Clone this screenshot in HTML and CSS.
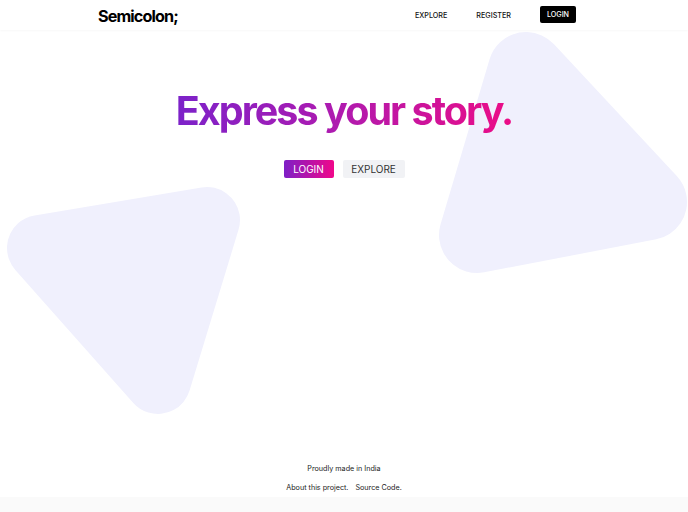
FILE: index.html
```html
<!DOCTYPE html>
<html lang="en">
<head>
<meta charset="utf-8">
<title>Semicolon;</title>
<link rel="stylesheet" href="styles.css">
</head>
<body>
<svg class="blob blob-left" width="260" height="430" viewBox="0 0 260 430" aria-hidden="true">
  <polygon points="40,248 207,220 158,381" fill="#f0f0fd" stroke="#f0f0fd" stroke-width="66" stroke-linejoin="round"/>
</svg>
<svg class="blob blob-right" width="688" height="300" viewBox="0 0 688 300" aria-hidden="true">
  <polygon points="526,70 477,235 649,202" fill="#f0f0fd" stroke="#f0f0fd" stroke-width="76" stroke-linejoin="round"/>
</svg>
<header class="topbar">
  <div class="topbar-inner">
    <a class="logo" href="#">Semicolon;</a>
    <nav class="nav">
      <a class="nav-link" href="#">EXPLORE</a>
      <a class="nav-link" href="#">REGISTER</a>
      <a class="nav-btn" href="#">LOGIN</a>
    </nav>
  </div>
</header>
<main class="hero">
  <h1 class="hero-title">Express your story.</h1>
  <div class="hero-actions">
    <a class="btn btn-primary" href="#">LOGIN</a>
    <a class="btn btn-light" href="#">EXPLORE</a>
  </div>
</main>
<footer class="footer">
  <p class="footer-line">Proudly made in India</p>
  <p class="footer-links"><a href="#">About this project.</a><a href="#">Source Code.</a></p>
</footer>
<div class="bottom-band"></div>
</body>
</html>
```

FILE: styles.css
```css
* { box-sizing: border-box; }
html, body { margin: 0; padding: 0; }
body {
  font-family: Inter, "Noto Sans", sans-serif;
  color: #111;
  background: #fff;
  min-height: 512px;
  display: flex;
  flex-direction: column;
  position: relative;
  overflow: hidden;
}
a { color: inherit; text-decoration: none; }

.blob { position: absolute; z-index: 0; }
.blob-left { left: 0; top: 0; }
.blob-right { left: 0; top: 0; }

.topbar {
  position: relative;
  z-index: 1;
  height: 30px;
  background: #fff;
  box-shadow: 0 1px 2px rgba(0,0,0,0.03);
}
.topbar-inner {
  width: 478px;
  margin-left: 98px;
  height: 100%;
  display: flex;
  align-items: center;
  justify-content: space-between;
}
.logo {
  font-size: 16.2px;
  font-weight: 700;
  letter-spacing: -0.055em;
  color: #000;
  margin-top: 1px;
}
.nav {
  display: flex;
  align-items: center;
  gap: 29px;
}
.nav-link {
  font-size: 7.2px;
  font-weight: 500;
  color: #111;
}
.nav-btn {
  font-size: 7.2px;
  font-weight: 500;
  color: #fff;
  background: #000;
  border-radius: 2px;
  height: 17px;
  width: 36px;
  justify-content: center;
  display: flex;
  align-items: center;
  margin-top: -2px;
}

.hero {
  position: relative;
  z-index: 1;
  flex: 1;
  display: flex;
  flex-direction: column;
  align-items: center;
  padding-top: 56px;
}
.hero-title {
  margin: 0;
  font-size: 39.5px;
  font-weight: 700;
  letter-spacing: -0.05em;
  line-height: 50px;
  background: linear-gradient(90deg, #7c22c9 0%, #b11aae 50%, #ec0c86 100%);
  -webkit-background-clip: text;
  background-clip: text;
  color: transparent;
}
.hero-actions {
  display: flex;
  gap: 9px;
  margin-top: 24px;
}
.btn {
  height: 18px;
  display: flex;
  align-items: center;
  font-size: 10px;
  font-weight: 400;
  border-radius: 2px;
}
.btn-primary {
  width: 50px;
  justify-content: center;
  color: #fff;
  background: linear-gradient(90deg, #7e1fc6 0%, #f0078a 100%);
}
.btn-light {
  width: 62px;
  justify-content: center;
  color: #333;
  background: #f1f2f5;
}

.footer {
  position: relative;
  z-index: 1;
  text-align: center;
  font-size: 7.2px;
  color: #222;
  padding-bottom: 5px;
}
.footer-line { margin: 0 0 10px; line-height: 9px; }
.footer-links { margin: 0; line-height: 9px; display: flex; justify-content: center; gap: 7px; }

.bottom-band {
  position: relative;
  z-index: 1;
  height: 15px;
  background: #fafafa;
}
```
